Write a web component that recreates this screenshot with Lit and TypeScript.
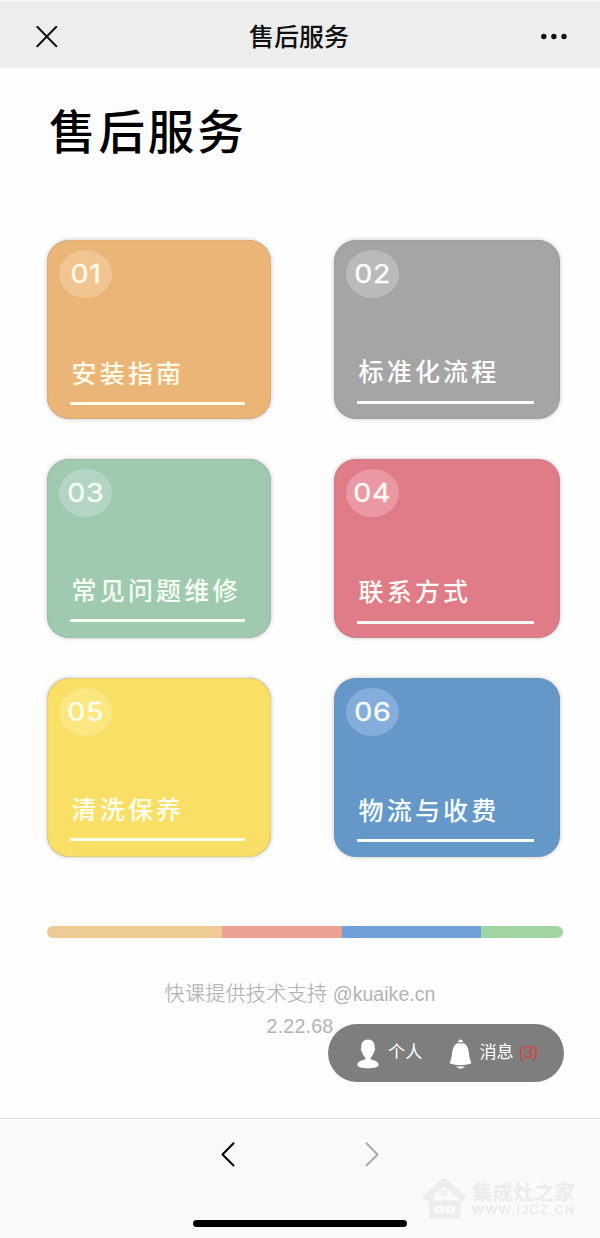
import { LitElement, html, css } from "lit";
import { customElement } from "lit/decorators.js";
import { styleMap } from "lit/directives/style-map.js";

interface ServiceCard {
  no: string;
  title: string;
  color: string;
  badge: string;
  ink: string;
  titleGap: number;
  bottom: number;
}

const CARDS: ServiceCard[] = [
  { no: "01", title: "安装指南", color: "#ecb578", badge: "#f1c592", ink: "#fffbe9", titleGap: 13.5, bottom: 14 },
  { no: "02", title: "标准化流程", color: "#a5a5a5", badge: "#bababa", ink: "#ffffff", titleGap: 14, bottom: 15.5 },
  { no: "03", title: "常见问题维修", color: "#a0caaf", badge: "#b4d5c3", ink: "#f6fff4", titleGap: 13, bottom: 16.5 },
  { no: "04", title: "联系方式", color: "#e07c88", badge: "#e998a4", ink: "#fffaf6", titleGap: 13.5, bottom: 14.5 },
  { no: "05", title: "清洗保养", color: "#f9df66", badge: "#fbe680", ink: "#fffff0", titleGap: 13, bottom: 16.5 },
  { no: "06", title: "物流与收费", color: "#6598c8", badge: "#84addb", ink: "#f8ffff", titleGap: 13.5, bottom: 15 },
];

const SEGMENTS = [
  { color: "#eeca94", size: 175 },
  { color: "#eba092", size: 119.5 },
  { color: "#729fda", size: 139 },
  { color: "#a0d5a1", size: 82 },
];

@customElement("app-root")
export class AppRoot extends LitElement {
  static styles = css`
    :host {
      display: flex;
      flex-direction: column;
      box-sizing: border-box;
      width: 600px;
      height: 1238px;
      position: relative;
      overflow: hidden;
      background: #fefefe;
      color: #000;
      font-family: "Liberation Sans", "Noto Sans CJK SC", sans-serif;
    }
    svg {
      display: block;
      flex: none;
    }
    .top {
      display: flex;
      align-items: center;
      justify-content: space-between;
      box-sizing: border-box;
      height: 68px;
      padding: 4px 32px 0 36px;
      background: #ededed;
      border-top: 1px solid #f8f8f8;
    }
    .top-title {
      font-size: 25px;
      line-height: 36px;
      font-weight: 500;
      color: #111;
    }
    .main {
      flex: 1;
      padding: 0 38px 0 47px;
    }
    .heading {
      margin: 35px 0 0 2px;
      font-size: 46.5px;
      line-height: 60px;
      font-weight: 500;
      letter-spacing: 2.9px;
    }
    .grid {
      display: grid;
      grid-template-columns: 224px 226px;
      grid-auto-rows: 179.5px;
      column-gap: 63px;
      row-gap: 39.5px;
      margin-top: 76.5px;
    }
    .card {
      display: flex;
      flex-direction: column;
      box-sizing: border-box;
      padding: 10px 26px 0 12px;
      border-radius: 22px;
      box-shadow: inset 0 0 1.5px rgba(120, 125, 140, 0.7), 0 0 4px rgba(110, 110, 110, 0.4);
    }
    .badge {
      display: flex;
      align-items: center;
      justify-content: center;
      width: 53px;
      height: 48px;
      border-radius: 50%;
      font-family: Inter, sans-serif;
      font-size: 26px;
      line-height: 48px;
      font-weight: 400;
      -webkit-text-stroke: 0.35px currentColor;
    }
    .digits {
      transform: scaleX(1.1);
      letter-spacing: 0.5px;
    }
    .label {
      margin-top: auto;
      padding-left: 12.5px;
      font-size: 25px;
      line-height: 30px;
      font-weight: 500;
      letter-spacing: 3.2px;
      white-space: nowrap;
    }
    .rule {
      height: 3px;
      margin-left: 11px;
      background: currentColor;
    }
    .bar {
      display: flex;
      height: 12px;
      width: 515.5px;
      margin-top: 68.5px;
      border-radius: 6px;
      overflow: hidden;
    }
    .credit {
      margin: 40.5px 0 0 -9px;
      font-size: 19.6px;
      line-height: 32px;
      text-align: center;
      color: #b3b3b3;
    }
    .credit-name {
      font-size: 20px;
      font-weight: 300;
      letter-spacing: 0.35px;
      -webkit-text-stroke: 0.25px currentColor;
    }
    .version {
      letter-spacing: 0.2px;
    }
    .pill {
      position: absolute;
      left: 328px;
      top: 1024px;
      display: flex;
      align-items: center;
      box-sizing: border-box;
      width: 236px;
      height: 58px;
      padding: 0 26px 2px 29px;
      border-radius: 29px;
      background: #7e7e7e;
      color: #fff;
      font-size: 17.2px;
      line-height: 26px;
      white-space: nowrap;
    }
    .pill-icon {
      margin-top: 3px;
    }
    .person-text {
      margin: 0 27px 0 9px;
    }
    .message-text {
      margin: 0 5px 0 7px;
    }
    .count {
      color: #d2443c;
      letter-spacing: -0.8px;
    }
    .bottom {
      display: flex;
      flex-direction: column;
      align-items: center;
      box-sizing: border-box;
      height: 120px;
      border-top: 1px solid #e4e4e4;
      background: #fafafa;
    }
    .nav {
      display: flex;
      gap: 128px;
      margin-top: 22px;
    }
    .home {
      width: 214px;
      height: 7px;
      margin-top: 52px;
      border-radius: 4px;
      background: #000;
    }
    .mark {
      position: absolute;
      left: 421px;
      top: 1176px;
      display: flex;
      align-items: center;
      gap: 5px;
      color: #ececec;
    }
    .mark-words {
      display: flex;
      flex-direction: column;
      padding-top: 2px;
    }
    .mark-name {
      font-size: 20.6px;
      line-height: 22px;
      font-weight: 700;
    }
    .mark-url {
      font-size: 12.5px;
      line-height: 13px;
      letter-spacing: 1.6px;
      color: #e6e6e6;
    }
  `;

  private renderCard(card: ServiceCard) {
    return html`
      <div class="card" style=${styleMap({ background: card.color, color: card.ink, paddingBottom: `${card.bottom}px` })}>
        <div class="badge" style=${styleMap({ background: card.badge })}><span class="digits">${card.no}</span></div>
        <div class="label" style=${styleMap({ marginBottom: `${card.titleGap}px` })}>${card.title}</div>
        <div class="rule"></div>
      </div>
    `;
  }

  render() {
    return html`
      <header class="top">
        <svg width="22" height="22" viewBox="0 0 22 22" fill="none" stroke="#111" stroke-width="2" stroke-linecap="round">
          <path d="M1.3 .8 20.3 20.200M20.3 .8 1.3 20.200" />
        </svg>
        <span class="top-title">售后服务</span>
        <svg width="28" height="8" viewBox="0 0 28 8" fill="#111">
          <circle cx="3.8" cy="3.5" r="2.7" /><circle cx="13.9" cy="3.5" r="2.7" /><circle cx="24" cy="3.5" r="2.7" />
        </svg>
      </header>
      <main class="main">
        <h1 class="heading">售后服务</h1>
        <section class="grid">${CARDS.map((c) => this.renderCard(c))}</section>
        <div class="bar">
          ${SEGMENTS.map((s) => html`<div style=${styleMap({ width: `${s.size}px`, background: s.color })}></div>`)}
        </div>
        <div class="credit">
          <div><span class="credit-name">快课提供技术支持</span> @kuaike.cn</div>
          <div class="version">2.22.68</div>
        </div>
      </main>
      <div class="pill">
        <svg class="pill-icon" width="22" height="30" viewBox="0 0 22 30" fill="#fff">
          <path d="M11 .5C6.700.5 4.300 3.500 4.300 7.600c0 .9.1 1.400-.3 2-.5 1 .1 2.600 1 3.200.5 2.500 1.700 4.600 3.400 5.600v1.600C7.700 21.200.3 21.400.3 25.700c0 2.300 4.800 3.600 10.700 3.600s10.700-1.300 10.700-3.600c0-4.300-7.400-4.500-8.100-5.700v-1.600c1.700-1 2.900-3.100 3.400-5.600.9-.6 1.500-2.200 1-3.200-.4-.6-.3-1.100-.3-2C17.700 3.500 15.300.5 11 .5Z" />
        </svg>
        <span class="person-text">个人</span>
        <svg class="pill-icon" width="23" height="30" viewBox="0 0 23 30" fill="#fff">
          <path d="M8.700 3.100C9.200 1.400 10.200.5 11.500.5s2.300.9 2.800 2.600C13.300 3.500 9.700 3.500 8.700 3.100Z" />
          <path d="M8.300 4.200q3.200.8 6.400 0C18.400 6.200 19.500 10 20 15c.3 3.800 1.300 6.500 2.500 9.200Q11.500 28.200.5 24.200C1.700 21.500 2.700 18.800 3 15c.5-5 1.600-8.800 5.300-10.800Z" />
          <path d="M7.300 27.200q4.200.5 8.400 0C14.900 28.700 13.300 29.600 11.500 29.600S8.100 28.700 7.300 27.200Z" />
        </svg>
        <span class="message-text">消息</span><span class="count">(3)</span>
      </div>
      <footer class="bottom">
        <nav class="nav">
          <svg width="16" height="27" viewBox="0 0 16 27" fill="none" stroke="#000" stroke-width="2" stroke-linecap="round" stroke-linejoin="round">
            <path d="M13.500 2.300 2.500 13.500 13.500 24.500" />
          </svg>
          <svg width="16" height="27" viewBox="0 0 16 27" fill="none" stroke="#ababab" stroke-width="2" stroke-linecap="round" stroke-linejoin="round">
            <path d="M2.500 2.300 13.500 13.500 2.500 24.500" />
          </svg>
        </nav>
        <div class="home"></div>
      </footer>
      <div class="mark">
        <svg width="46" height="44" viewBox="0 0 46 44">
          <path d="M3.500 23.500 23 5.500 43.500 23.500" fill="none" stroke="#ededed" stroke-width="6.500" stroke-linejoin="round" />
          <path d="M8 20H13V27H8Z" fill="#ededed" />
          <rect x="20.300" y="14" width="6" height="6" fill="#ebebeb" />
          <path d="M23.300 14v6M20.300 17h6" stroke="#fafafa" stroke-width=".8" />
          <path fill="#ededed" fill-rule="evenodd" d="M8 24.500H39.500V39.500Q39.500 43 36 43H11.500Q8 43 8 39.500ZM15.500 30Q13.500 30 13.500 32V35.500Q13.500 37.500 15.500 37.500H32Q34 37.500 34 35.500V32Q34 30 32 30Z" />
          <g fill="#e6e6e6"><circle cx="18.500" cy="33.700" r="1.200" /><circle cx="29" cy="33.700" r="1.200" /><path d="M23.300 29.500h1v8.500h-1z" /></g>
        </svg>
        <div class="mark-words">
          <span class="mark-name">集成灶之家</span>
          <span class="mark-url">WWW.IJCZ.CN</span>
        </div>
      </div>
    `;
  }
}
